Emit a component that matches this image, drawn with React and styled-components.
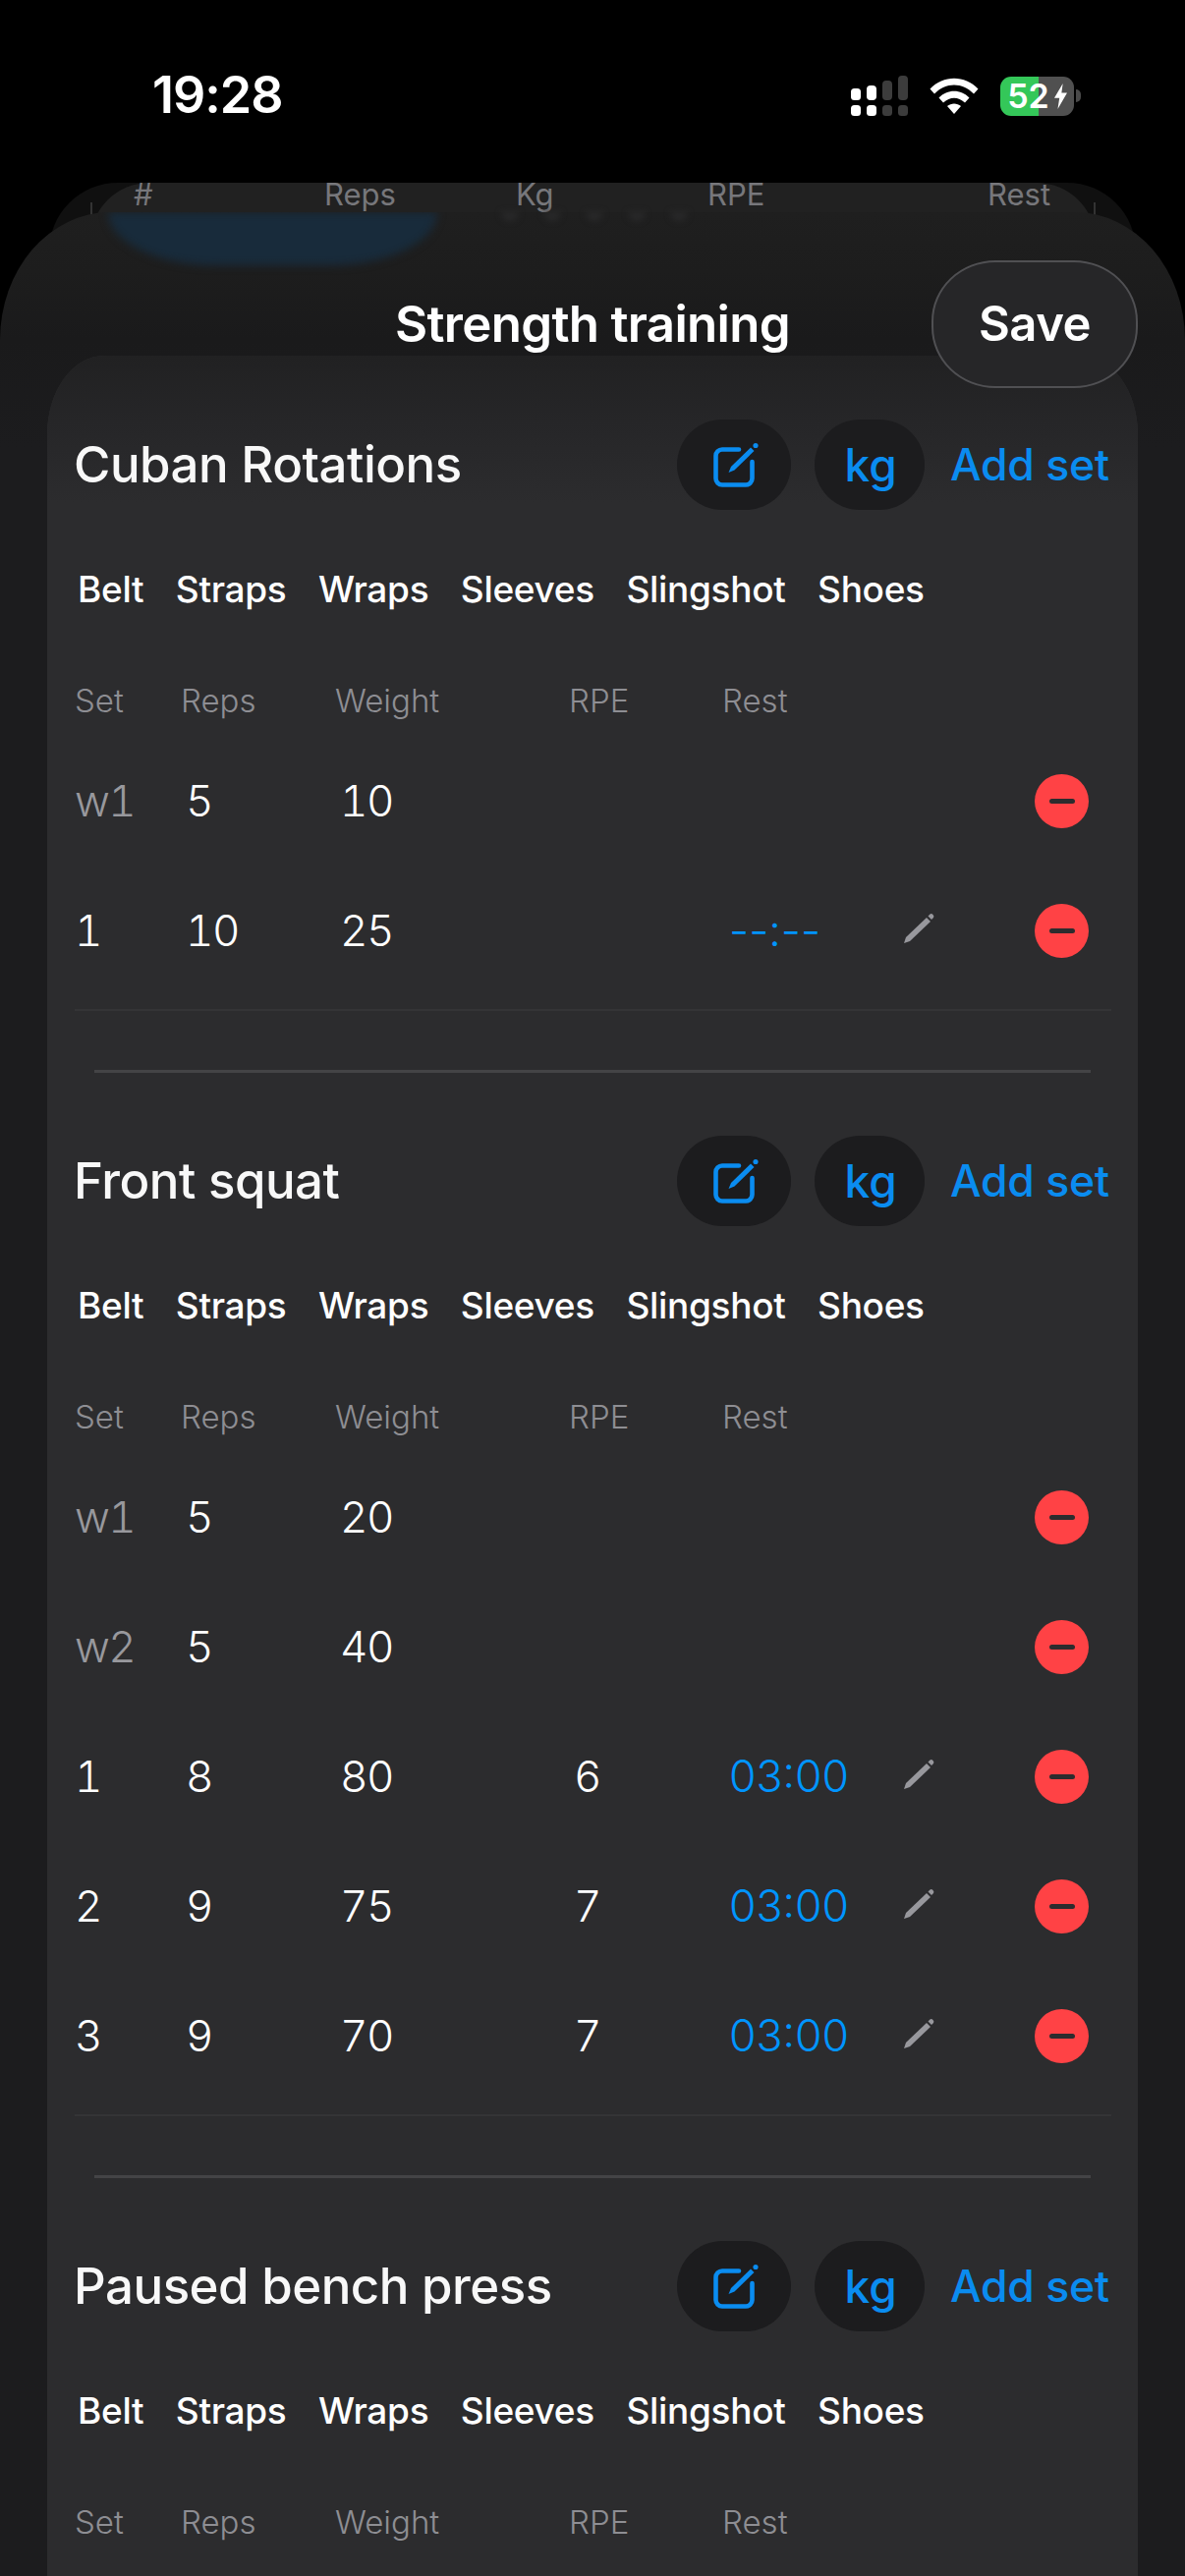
import React from "react";
import styled, { createGlobalStyle } from "styled-components";

const Global = createGlobalStyle`
  html, body { margin: 0; padding: 0; background: #000; }
  body { font-family: "Inter", "Liberation Sans", sans-serif; -webkit-font-smoothing: antialiased; }
`;

const BLUE = "#0a8cf0";

const Page = styled.div`
  position: relative;
  width: 1206px;
  height: 2622px;
  overflow: hidden;
  background: #000;
`;

const StatusBar = styled.div`
  height: 186px;
  box-sizing: border-box;
  padding: 69px 113px 0 155px;
  display: flex;
  justify-content: space-between;
  align-items: flex-start;
`;
const Time = styled.div`
  font-size: 52px;
  line-height: 56px;
  font-weight: 600;
  color: #fff;
  letter-spacing: -1px;
`;
const StatusIcons = styled.div`
  display: flex;
  align-items: center;
  gap: 22px;
  margin-top: 8px;
`;
const Battery = styled.div`
  width: 75px;
  height: 40px;
  border-radius: 11px;
  background: linear-gradient(90deg, #34c759 0 52%, #505050 52% 100%);
  display: flex;
  align-items: center;
  justify-content: center;
  gap: 5px;
  color: #fff;
  font-size: 34px;
  line-height: 40px;
  font-weight: 600;
  position: relative;
  box-sizing: border-box;
  &::after {
    content: "";
    position: absolute;
    right: -7px;
    top: 13px;
    width: 5px;
    height: 13px;
    border-radius: 0 6px 6px 0;
    background: #4a4a4a;
  }
`;

const BackOuter = styled.div`
  position: absolute;
  left: 50px;
  right: 50px;
  top: 186px;
  height: 80px;
  border-radius: 70px 70px 0 0;
  background: #101010;
`;
const BackTable = styled.div`
  position: absolute;
  left: 92px;
  right: 91px;
  top: 186px;
  height: 60px;
  border-radius: 70px 70px 0 0;
  background: #212121;
  color: #77777b;
  font-size: 31px;
  line-height: 24px;
  &::before, &::after {
    content: "";
    position: absolute;
    top: 20px;
    width: 2px;
    height: 20px;
    background: #333;
  }
  &::before { left: 0; }
  &::after { right: 0; }
`;
const BackLabel = styled.span`
  position: absolute;
  top: 0;
  left: ${(p) => p.$x}px;
`;

const Sheet = styled.div`
  position: absolute;
  left: 0;
  right: 0;
  top: 216px;
  bottom: 0;
  display: flex;
  flex-direction: column;
  border-radius: 112px 112px 0 0 / 130px 130px 0 0;
  background: linear-gradient(180deg, #1f1f1f 0, #1d1d1d 60px, #1a1a1b 130px, #1c1c1e 240px);
`;
const Blob = styled.div`
  position: absolute;
  left: 110px;
  top: 0;
  width: 335px;
  height: 54px;
  background: #182b3b;
  border-radius: 0 0 110px 110px / 0 0 54px 54px;
  filter: blur(4px);
  clip-path: inset(0 -10px -20px -10px);
`;
const BlurDots = styled.div`
  position: absolute;
  left: 510px;
  top: 0;
  display: flex;
  gap: 25px;
  filter: blur(3px);
`;
const BlurDot = styled.span`
  width: 18px;
  height: 9px;
  border-radius: 0 0 9px 9px;
  background: #29292a;
`;
const NavBar = styled.div`
  position: relative;
  z-index: 2;
  height: 146px;
  flex: none;
  box-sizing: border-box;
  padding-top: 86px;
  display: flex;
  justify-content: center;
`;
const NavTitle = styled.div`
  font-size: 51px;
  line-height: 56px;
  font-weight: 600;
  color: #fff;
  letter-spacing: -0.7px;
`;
const SaveButton = styled.button`
  position: absolute;
  left: 948px;
  top: 49px;
  width: 210px;
  height: 130px;
  border-radius: 65px / 62px;
  border: 2.5px solid #505053;
  background: #262628;
  color: #fff;
  font: 600 49px/56px "Inter", sans-serif;
  letter-spacing: -0.5px;
  padding: 0;
`;

const Card = styled.div`
  position: relative;
  flex: 1;
  margin: 0 48px;
  background: #2c2c2e;
  border-radius: 58px 58px 0 0 / 80px 80px 0 0;
  &::before {
    content: "";
    position: absolute;
    inset: 0 0 auto 0;
    height: 150px;
    border-radius: 58px 58px 0 0 / 80px 80px 0 0;
    background: linear-gradient(180deg, #212122 0, #262628 45%, #2c2c2e 100%);
  }
`;
const Section = styled.section`
  position: relative;
  padding: 65px 0 0 28px;
  & + & { padding-top: 64px; }
`;
const SectionHead = styled.div`
  display: flex;
  align-items: center;
  height: 92px;
  padding-right: 29px;
`;
const ExerciseName = styled.h2`
  flex: 1;
  margin: 0 0 0 -1px;
  font-size: 51px;
  line-height: 60px;
  font-weight: 500;
  color: #f8f8f8;
  letter-spacing: -0.5px;
`;
const PillButton = styled.div`
  width: ${(p) => p.$w}px;
  height: 92px;
  margin-right: ${(p) => p.$mr}px;
  padding-left: ${(p) => p.$pl || 0}px;
  box-sizing: border-box;
  border-radius: 46px;
  background: #1c1c1e;
  color: ${BLUE};
  display: flex;
  align-items: center;
  justify-content: center;
  font-size: 46px;
  font-weight: 500;
`;
const AddSet = styled.div`
  color: ${BLUE};
  font-size: 44.5px;
  font-weight: 500;
  letter-spacing: -0.2px;
  line-height: 60px;
`;
const Tags = styled.div`
  display: flex;
  gap: 32.5px;
  margin: 60px 0 0 3px;
  height: 40px;
  align-items: center;
`;
const Tag = styled.span`
  color: #fff;
  font-size: 37px;
  font-weight: 500;
  letter-spacing: -0.3px;
`;
const Grid = styled.div`
  display: grid;
  grid-template-columns: 108px 157px 238px 156px 184px 134px 55px;
`;
const HeadRow = styled(Grid)`
  padding-top: 74px;
  height: 40px;
  align-items: center;
`;
const HeadCell = styled.span`
  color: #8e8e93;
  font-size: 33px;
  line-height: 40px;
  font-weight: 300;
`;
const Rows = styled.div`
  margin-top: 16px;
  padding-bottom: 14px;
  width: 1055px;
  border-bottom: 2px solid #343436;
`;
const Row = styled(Grid)`
  height: 132px;
  align-items: center;
`;
const Value = styled.span`
  color: ${(p) => (p.$muted ? "#98989d" : "#fff")};
  font-size: 44px;
  line-height: 52px;
  font-weight: 300;
  padding-left: ${(p) => p.$pad || 0}px;
  font-feature-settings: "tnum";
  letter-spacing: -1.5px;
`;
const Rest = styled.span`
  color: #0095ff;
  font-size: 44.5px;
  line-height: 52px;
  font-weight: 300;
  padding-left: 7px;
`;
const Minus = styled.div`
  width: 55px;
  height: 55px;
  border-radius: 50%;
  background: #ff4245;
  display: flex;
  align-items: center;
  justify-content: center;
  &::after {
    content: "";
    width: 26px;
    height: 5px;
    border-radius: 3px;
    background: #2c2c2e;
  }
`;
const Divider = styled.div`
  height: 3px;
  width: 1014px;
  margin: 60px 0 0 20px;
  background: #444446;
`;

const Signal = () => (
  <svg width="58" height="41" viewBox="0 0 58 41">
    <g fill="#fff">
      <rect x="0" y="13" width="10" height="12" rx="3.5" />
      <rect x="16" y="10" width="10" height="15" rx="4" />
      <rect x="0" y="30" width="10" height="11" rx="3.5" />
      <rect x="16" y="30" width="10" height="11" rx="3.5" />
    </g>
    <g fill="#3c3c3c">
      <rect x="32" y="5" width="10" height="20" rx="4" />
      <rect x="48" y="0" width="10" height="25" rx="4" />
      <rect x="32" y="30" width="10" height="11" rx="3.5" />
      <rect x="48" y="30" width="10" height="11" rx="3.5" />
    </g>
  </svg>
);

const Wifi = () => (
  <svg width="50" height="37" viewBox="0 0 50 37">
    <path d="M0.5 11.5 C14 -3 36 -3 49.5 11.5 L45 16.5 C33.5 4.5 16.5 4.5 5 16.5 Z" fill="#fff" />
    <path d="M9.5 20.5 C18 11.5 32 11.5 40.5 20.5 L36 25.5 C29 19 21 19 14 25.5 Z" fill="#fff" />
    <path d="M18 29 C22 25.5 28 25.5 32 29 L25 37 Z" fill="#fff" />
  </svg>
);

const Bolt = () => (
  <svg width="13" height="26" viewBox="0 0 15 30">
    <path d="M10 0 L0 17 H6 L4 30 L15 11 H8.5 Z" fill="#fff" />
  </svg>
);

const EditIcon = () => (
  <svg width="48" height="48" viewBox="0 0 48 48">
    <path
      d="M27 8.5 H10 a6.5 6.5 0 0 0 -6.5 6.5 V38 a6.5 6.5 0 0 0 6.5 6.5 H34 a6.5 6.5 0 0 0 6.5 -6.5 V21"
      fill="none"
      stroke={BLUE}
      strokeWidth="4.6"
      strokeLinecap="round"
    />
    <path d="M16.5 32 L19 26 L39 6.5 L42.5 10 L22.5 29.5 Z" fill={BLUE} />
    <circle cx="44" cy="4.5" r="2.6" fill={BLUE} />
  </svg>
);

const Pencil = () => (
  <svg width="32" height="32" viewBox="0 0 32 32">
    <path d="M1 31 L3 25 L24 5 L28 9 L7 29 Z" fill="#98989d" />
    <path d="M25.5 3.5 L27.5 1.5 Q29 0.5 30.5 2 Q32 3.5 31 5 L29 7 Z" fill="#98989d" />
  </svg>
);

const PencilCell = styled.div`
  display: flex;
  height: 32px;
  transform: translateY(-2px);
`;

const TAGS = ["Belt", "Straps", "Wraps", "Sleeves", "Slingshot", "Shoes"];

const SetRow = ({ s, reps, kg, rpe, rest }) => {
  const warm = s[0] === "w";
  return (
    <Row>
      <Value $muted={warm}>{s}</Value>
      <Value $pad={5}>{reps}</Value>
      <Value $pad={5}>{kg}</Value>
      <Value $pad={5}>{rpe}</Value>
      {rest ? <Rest>{rest}</Rest> : <span />}
      {warm ? <span /> : <PencilCell><Pencil /></PencilCell>}
      <Minus />
    </Row>
  );
};

const Exercise = ({ name, rows }) => (
  <Section>
    <SectionHead>
      <ExerciseName>{name}</ExerciseName>
      <PillButton $w={116} $mr={24} $pl={4}><EditIcon /></PillButton>
      <PillButton $w={112} $mr={26} $pl={2}>kg</PillButton>
      <AddSet>Add set</AddSet>
    </SectionHead>
    <Tags>{TAGS.map((t) => <Tag key={t}>{t}</Tag>)}</Tags>
    <HeadRow>
      <HeadCell>Set</HeadCell>
      <HeadCell>Reps</HeadCell>
      <HeadCell>Weight</HeadCell>
      <HeadCell>RPE</HeadCell>
      <HeadCell>Rest</HeadCell>
    </HeadRow>
    {rows && (
      <>
        <Rows>
          {rows.map((r) => <SetRow key={r.s} {...r} />)}
        </Rows>
        <Divider />
      </>
    )}
  </Section>
);

const SECTIONS = [
  {
    name: "Cuban Rotations",
    rows: [
      { s: "w1", reps: "5", kg: "10" },
      { s: "1", reps: "10", kg: "25", rest: "--:--" },
    ],
  },
  {
    name: "Front squat",
    rows: [
      { s: "w1", reps: "5", kg: "20" },
      { s: "w2", reps: "5", kg: "40" },
      { s: "1", reps: "8", kg: "80", rpe: "6", rest: "03:00" },
      { s: "2", reps: "9", kg: "75", rpe: "7", rest: "03:00" },
      { s: "3", reps: "9", kg: "70", rpe: "7", rest: "03:00" },
    ],
  },
  { name: "Paused bench press" },
];

export default function App() {
  return (
    <Page>
      <Global />
      <StatusBar>
        <Time>19:28</Time>
        <StatusIcons>
          <Signal />
          <Wifi />
          <Battery>52<Bolt /></Battery>
        </StatusIcons>
      </StatusBar>
      <BackOuter />
      <BackTable>
        <BackLabel $x={44}>#</BackLabel>
        <BackLabel $x={238}>Reps</BackLabel>
        <BackLabel $x={433}>Kg</BackLabel>
        <BackLabel $x={628}>RPE</BackLabel>
        <BackLabel $x={913}>Rest</BackLabel>
      </BackTable>
      <Sheet>
        <Blob />
        <BlurDots>
          {[0, 1, 2, 3, 4].map((i) => <BlurDot key={i} />)}
        </BlurDots>
        <NavBar>
          <NavTitle>Strength training</NavTitle>
          <SaveButton>Save</SaveButton>
        </NavBar>
        <Card>
          {SECTIONS.map((s) => <Exercise key={s.name} {...s} />)}
        </Card>
      </Sheet>
    </Page>
  );
}
